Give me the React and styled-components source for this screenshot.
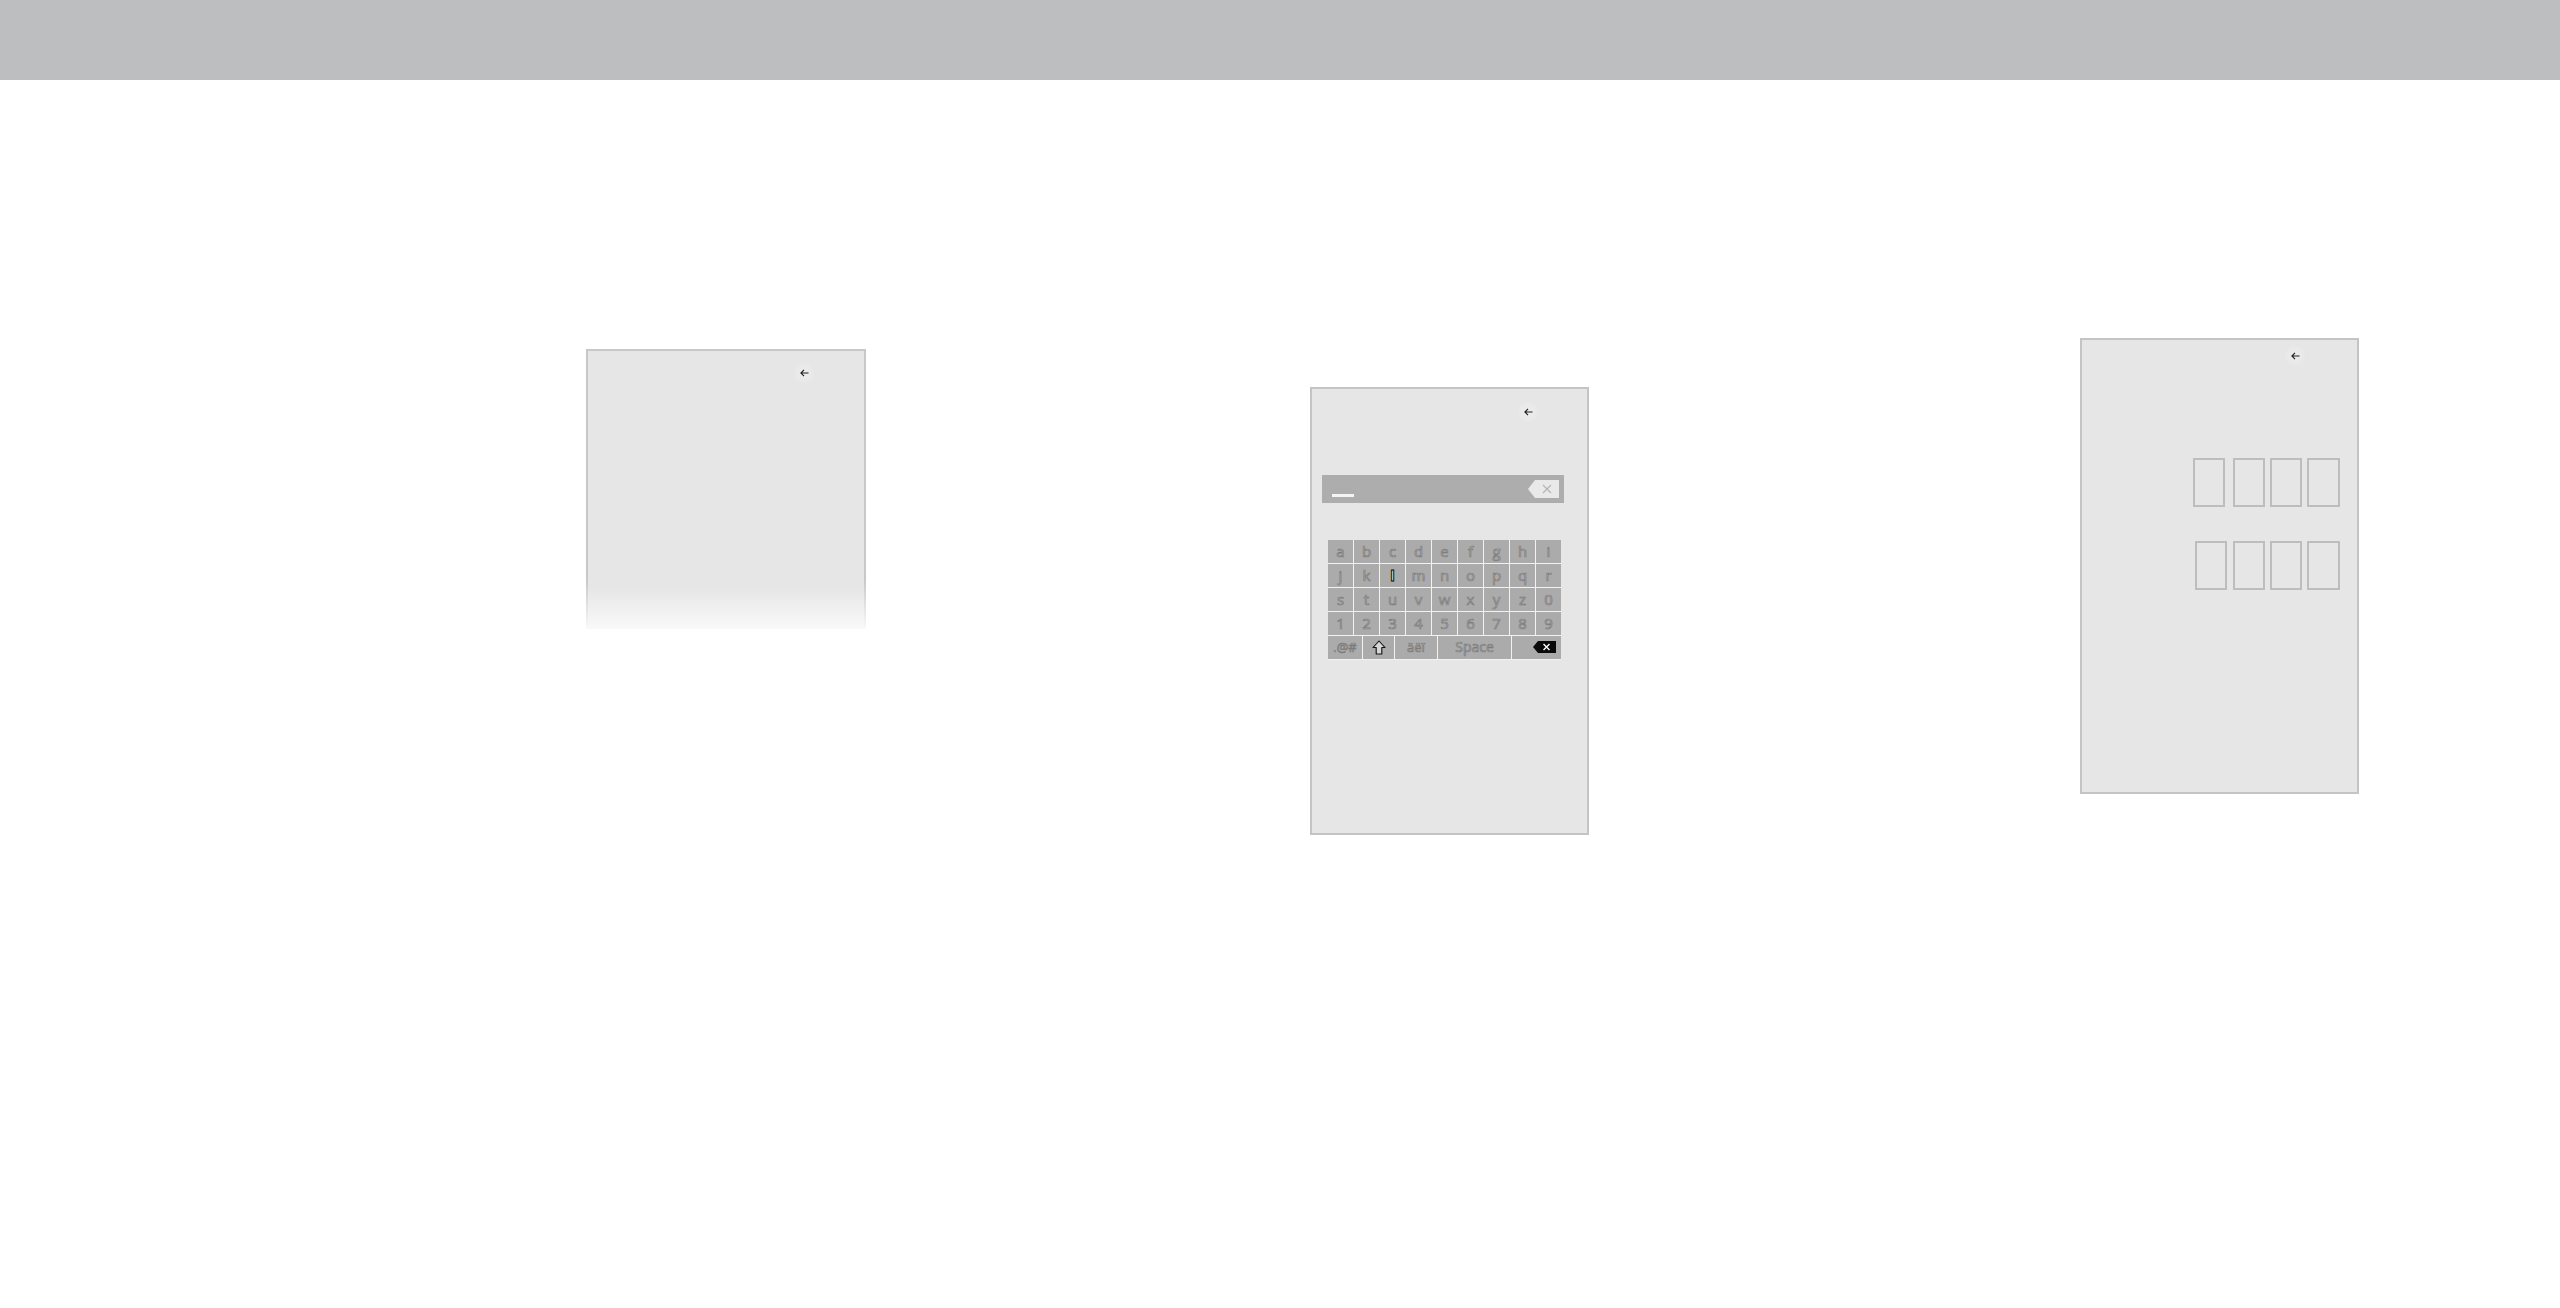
import React from 'react';
import styled, { createGlobalStyle } from 'styled-components';

const Global = createGlobalStyle`
    html, body {
        margin: 0;
        padding: 0;
        background: #ffffff;
        font-family: 'Open Sans', 'Liberation Sans', sans-serif;
    }
`

const Page = styled.div`
    width: 2560px;
    height: 1308px;
    background: #ffffff;
    overflow: hidden;
`

const Header = styled.div`
    height: 80px;
    background: #bdbebf;
`

const Canvas = styled.div`
    display: flex;
    align-items: flex-start;
    padding-left: 586px;
`

const Panel = styled.div`
    box-sizing: border-box;
    flex: none;
    width: ${p => p.w}px;
    height: ${p => p.h}px;
    margin-top: ${p => p.top}px;
    margin-left: ${p => p.left || 0}px;
    background: #e6e6e6;
    border: 2px solid #c4c4c4;
    display: flex;
    flex-direction: column;
`

const FadePanel = styled(Panel)`
    border-bottom: none;
    border-image: linear-gradient(to bottom, #c8c8c8 0%, #c8c8c8 82%, #fbfbfb 100%) 2;
    background: linear-gradient(to bottom, #e6e6e6 0%, #e6e6e6 85%, #f9f9f9 100%);
`

const TopBar = styled.div`
    display: flex;
    padding: ${p => p.pt}px 0 0 ${p => p.pl}px;
`

const BackButton = styled.div`
    width: 20px;
    height: 20px;
    border-radius: 50%;
    background: radial-gradient(circle, #ededed 0%, #e8e8e8 70%, #e6e6e6 100%);
    display: flex;
    align-items: center;
    justify-content: center;
`

const InputBar = styled.div`
    margin: 53px 0 0 10px;
    width: 242px;
    height: 28px;
    background: #adadad;
    display: flex;
    align-items: center;
    justify-content: space-between;
    padding: 0 5px 0 10px;
    box-sizing: border-box;
`

const Cursor = styled.div`
    width: 22px;
    height: 3px;
    background: #f4f4f4;
    margin-top: 12px;
`

const ClearTag = styled.div`
    width: 31px;
    height: 18px;
    display: flex;
`

const Keyboard = styled.div`
    margin: 37px 0 0 16px;
    width: 233px;
    display: flex;
    flex-direction: column;
    gap: 1px;
    background: #f2f2f2;
    border-bottom: 1px solid #f2f2f2;
`

const KeyRow = styled.div`
    display: grid;
    grid-template-columns: ${p => p.cols};
    gap: 1px;
    height: 23px;
`

const Key = styled.div`
    background: #ababab;
    display: flex;
    align-items: center;
    justify-content: ${p => (p.end ? 'flex-end' : 'center')};
    padding: 0 ${p => (p.end ? 5 : 0)}px 1px 0;
    font-size: ${p => p.fs || 15}px;
    font-family: 'Open Sans', 'Liberation Sans', sans-serif;
    font-weight: ${p => (p.focus ? 700 : 400)};
    color: ${p => (p.focus ? '#d8d8d8' : '#b6b6b6')};
    -webkit-text-stroke: ${p => (p.focus ? '0.9px #000' : '0.7px #7c7c7c')};
    line-height: 1;
`

const BoxGrid = styled.div`
    display: flex;
    flex-direction: column;
    gap: 34px;
    margin: 92px 0 0 111px;
`

const BoxRow = styled.div`
    display: flex;
    gap: 5px;
    padding-left: ${p => p.shift || 0}px;
`

const CodeBox = styled.div`
    box-sizing: border-box;
    width: ${p => p.w || 32}px;
    height: 49px;
    margin-left: ${p => p.gap || 0}px;
    border: 2px solid #bdbdbd;
`

function BackArrow() {
    return (
        <BackButton>
            <svg width="9" height="8" viewBox="0 0 9 8">
                <path d="M8.5 4H1M4 0.8L0.9 4L4 7.2" fill="none" stroke="#1e1e1e" strokeWidth="1.1" />
            </svg>
        </BackButton>
    );
}

const rows = [
    ['a', 'b', 'c', 'd', 'e', 'f', 'g', 'h', 'i'],
    ['j', 'k', 'l', 'm', 'n', 'o', 'p', 'q', 'r'],
    ['s', 't', 'u', 'v', 'w', 'x', 'y', 'z', '0'],
    ['1', '2', '3', '4', '5', '6', '7', '8', '9'],
];

function App() {
    return (
        <Page>
            <Global />
            <Header />
            <Canvas>
                <FadePanel w={280} h={280} top={269}>
                    <TopBar pt={12} pl={206}>
                        <BackArrow />
                    </TopBar>
                </FadePanel>

                <Panel w={279} h={448} top={307} left={444}>
                    <TopBar pt={13} pl={206}>
                        <BackArrow />
                    </TopBar>
                    <InputBar>
                        <Cursor />
                        <ClearTag>
                            <svg width="31" height="18" viewBox="0 0 31 18">
                                <path d="M7 0H31V18H7L0 9Z" fill="#e9e9e9" />
                                <path d="M15 5L23 13M23 5L15 13" stroke="#b5b5b5" strokeWidth="1.2" />
                            </svg>
                        </ClearTag>
                    </InputBar>
                    <Keyboard>
                        {rows.map((r, i) => (
                            <KeyRow key={i} cols="repeat(9, 1fr)">
                                {r.map(k => (
                                    <Key key={k} focus={k === 'l'}>{k}</Key>
                                ))}
                            </KeyRow>
                        ))}
                        <KeyRow cols="34px 31px 42px 73px 1fr">
                            <Key fs={13}>.@#</Key>
                            <Key>
                                <svg width="14" height="15" viewBox="0 0 14 15">
                                    <path d="M7 1L13 7.5H9.8V14H4.2V7.5H1Z" fill="#d6d6d6" stroke="#111" strokeWidth="1.1" strokeLinejoin="round" />
                                </svg>
                            </Key>
                            <Key fs={13}>äëï</Key>
                            <Key fs={14}>Space</Key>
                            <Key end>
                                <svg width="23" height="12" viewBox="0 0 23 12">
                                    <path d="M5 0H23V12H5L0 6Z" fill="#0a0a0a" />
                                    <path d="M10.5 3L16.5 9M16.5 3L10.5 9" stroke="#ffffff" strokeWidth="1.4" />
                                </svg>
                            </Key>
                        </KeyRow>
                    </Keyboard>
                </Panel>

                <Panel w={279} h={456} top={258} left={491}>
                    <TopBar pt={6} pl={203}>
                        <BackArrow />
                    </TopBar>
                    <BoxGrid>
                        <BoxRow>
                            <CodeBox />
                            <CodeBox gap={3} />
                            <CodeBox />
                            <CodeBox w={33} />
                        </BoxRow>
                        <BoxRow shift={2}>
                            <CodeBox />
                            <CodeBox gap={1} />
                            <CodeBox />
                            <CodeBox w={33} />
                        </BoxRow>
                    </BoxGrid>
                </Panel>
            </Canvas>
        </Page>
    );
}

export default App;
